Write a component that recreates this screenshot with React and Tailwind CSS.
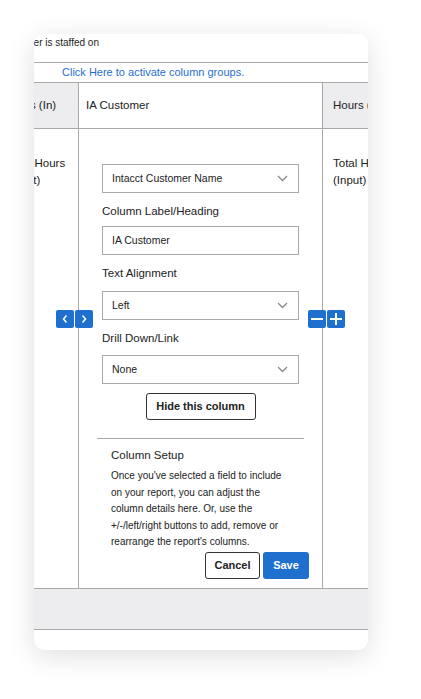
import React from "react";

const font = { fontFamily: '"Liberation Sans", Arial, sans-serif' };

const Chevron = () => (
  <svg width="11" height="7" viewBox="0 0 11 7" className="shrink-0">
    <polyline points="1,1 5.5,5.5 10,1" fill="none" stroke="#8a8a8a" strokeWidth="1.3" />
  </svg>
);

const SelectBox = ({ value }) => (
  <div className="h-[29px] w-full border border-[#a9a9a9] bg-white flex items-center justify-between pl-[9px] pr-[10px] text-[10.5px] text-[#222]">
    <span>{value}</span>
    <Chevron />
  </div>
);

const Label = ({ children, mb = "mb-[8px]" }) => (
  <p className={`mt-[11px] ${mb} text-[11.5px] leading-[14px] text-[#222]`}>{children}</p>
);

const BlueBtn = ({ children }) => (
  <div className="w-[18px] h-[18px] rounded-[2px] bg-[#1f6fcf] flex items-center justify-center">{children}</div>
);

export default function App() {
  return (
    <div className="min-h-[699px] bg-white pt-[34px] pl-[34px]" style={font}>
      <div className="relative w-[334px] h-[616px] rounded-[10px] bg-white overflow-hidden shadow-[0_6px_28px_rgba(0,0,0,0.13)]">
        {/* top description */}
        <div className="h-[29px] border-b border-[#a9a9a9] pt-[3px] whitespace-nowrap text-[10px] leading-[12px] text-[#222]">
          <span className="-ml-[31px]">Manager is staffed on</span>
        </div>
        <div className="h-[20px] border-b border-[#a9a9a9] pl-[28px] text-[11px] leading-[19px] text-[#1f6fcf]">
          Click Here to activate column groups.
        </div>

        {/* header row */}
        <div className="flex h-[46px] border-b border-[#a9a9a9] text-[11.5px] text-[#222]">
          <div className="-ml-[38px] w-[83px] shrink-0 border-r border-[#a9a9a9] bg-[#ededf0] flex items-center pl-[9px] whitespace-nowrap">Hours (In)</div>
          <div className="w-[244px] shrink-0 border-r border-[#a9a9a9] flex items-center pl-[7px]">IA Customer</div>
          <div className="w-[110px] shrink-0 bg-[#ededf0] flex items-center pl-[10px] whitespace-nowrap">Hours (In)</div>
        </div>

        {/* body row */}
        <div className="flex h-[460px] border-b border-[#a9a9a9] text-[11.5px] text-[#222]">
          <div className="-ml-[38px] w-[83px] shrink-0 border-r border-[#a9a9a9] pt-[26px] pl-[11px] leading-[17px] whitespace-nowrap">
            Total Hours<br />(Input)
          </div>
          <div className="w-[244px] shrink-0 border-r border-[#a9a9a9] pt-[35px]">
            <div className="px-[23px]">
              <SelectBox value="Intacct Customer Name" />
              <Label>Column Label/Heading</Label>
              <div className="h-[29px] border border-[#a9a9a9] flex items-center pl-[9px] text-[10.5px] text-[#222]">IA Customer</div>
              <Label mb="mb-[11px]">Text Alignment</Label>
              <SelectBox value="Left" />
              <Label mb="mb-[10px]">Drill Down/Link</Label>
              <SelectBox value="None" />
              <div className="flex justify-center mt-[9px]">
                <button className="w-[110px] h-[27px] border border-[#333] rounded-[3px] text-[11px] font-bold text-[#222]">Hide this column</button>
              </div>
            </div>
            <div className="mt-[18px] mx-[18px] border-t border-[#a9a9a9]" />
            <div className="pl-[32px]">
              <p className="mt-[9px] text-[11.5px] leading-[14px]">Column Setup</p>
              <p className="mt-[6px] text-[10px] leading-[16.5px] whitespace-nowrap">
                Once you've selected a field to include<br />
                on your report, you can adjust the<br />
                column details here. Or, use the<br />
                +/-/left/right buttons to add, remove or<br />
                rearrange the report's columns.
              </p>
            </div>
            <div className="flex justify-end gap-[3px] pr-[13px] mt-[1px]">
              <button className="w-[55px] h-[27px] border border-[#333] rounded-[3px] text-[11px] font-bold text-[#222]">Cancel</button>
              <button className="w-[46px] h-[27px] rounded-[3px] bg-[#1f6fcf] text-[11px] font-bold text-white">Save</button>
            </div>
          </div>
          <div className="w-[110px] shrink-0 pt-[26px] pl-[10px] leading-[17px] whitespace-nowrap">
            Total Hours<br />(Input)
          </div>
        </div>

        {/* footer row */}
        <div className="h-[41px] border-b border-[#a9a9a9] bg-[#ededf0]" />

        {/* overlay controls */}
        <div className="absolute left-[22px] top-[276px] flex gap-[1px]">
          <BlueBtn>
            <svg width="8" height="10" viewBox="0 0 8 10"><polyline points="5.5,1.5 2.5,5 5.5,8.5" fill="none" stroke="white" strokeWidth="1.5" /></svg>
          </BlueBtn>
          <BlueBtn>
            <svg width="8" height="10" viewBox="0 0 8 10"><polyline points="2.5,1.5 5.5,5 2.5,8.5" fill="none" stroke="white" strokeWidth="1.5" /></svg>
          </BlueBtn>
        </div>
        <div className="absolute left-[274px] top-[276px] flex gap-[1px]">
          <BlueBtn>
            <svg width="14" height="14" viewBox="0 0 14 14"><line x1="1" y1="7" x2="13" y2="7" stroke="white" strokeWidth="2" /></svg>
          </BlueBtn>
          <BlueBtn>
            <svg width="14" height="14" viewBox="0 0 14 14"><line x1="1" y1="7" x2="13" y2="7" stroke="white" strokeWidth="2" /><line x1="7" y1="1" x2="7" y2="13" stroke="white" strokeWidth="2" /></svg>
          </BlueBtn>
        </div>
      </div>
    </div>
  );
}
